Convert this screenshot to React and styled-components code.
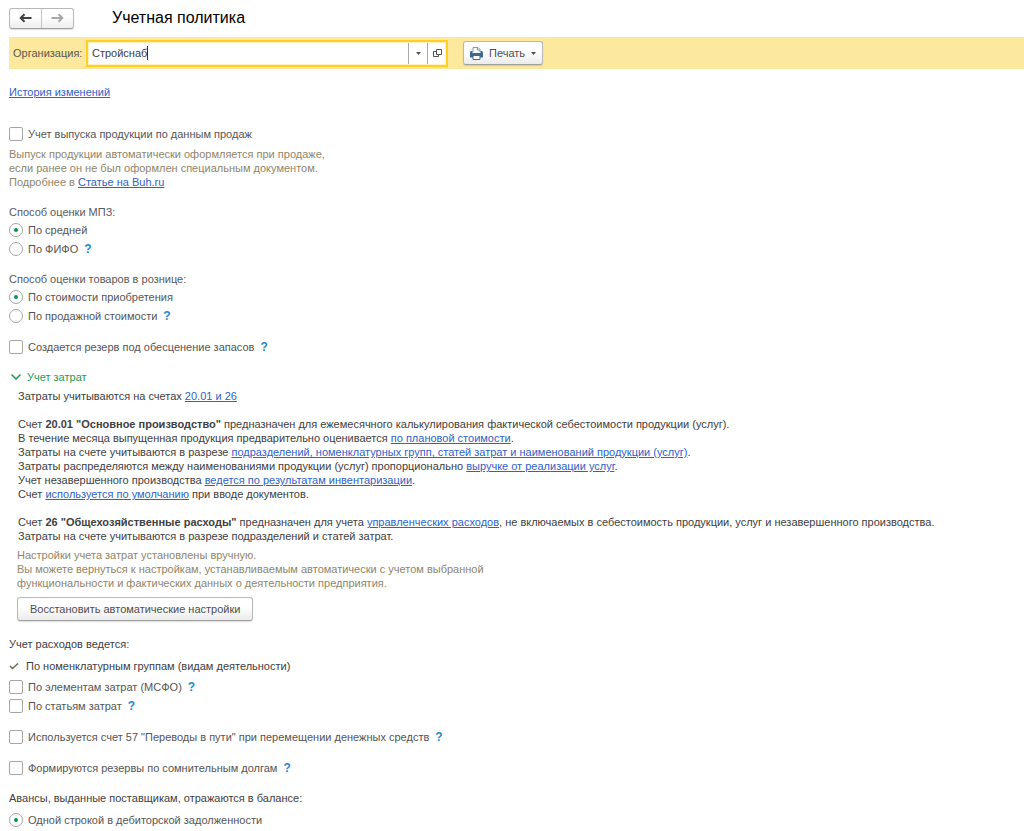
import React, { useId, useState } from 'react';
import styled, { createGlobalStyle } from 'styled-components';

const GlobalStyle = createGlobalStyle`
  *, *::before, *::after { box-sizing: border-box; }
  body {
    margin: 0;
    background: #fff;
    color: #4d4d4d;
    font: 11px/14px "Liberation Sans", Arial, sans-serif;
  }
  button, input { font: inherit; color: inherit; }
`;

const Page = styled.main`
  display: flex;
  flex-direction: column;
  padding: 7px 0 0 9px;
`;

const Header = styled.header`
  display: flex;
  align-items: center;
  gap: 38px;
  height: 22px;
`;

const Title = styled.h1`
  margin: 0;
  color: #000;
  font-size: 16px;
  line-height: 20px;
  font-weight: 400;
`;

const NavButtons = styled.div`
  display: flex;
  width: 65px;
  height: 21px;
  border: 1px solid #b8b8b8;
  border-bottom-color: #a0a0a0;
  border-radius: 3px;
  background: linear-gradient(#fff 40%, #ededed);
  box-shadow: 0 1px 1px #ddd;
`;

const NavButton = styled.button`
  flex: 1;
  display: flex;
  align-items: center;
  justify-content: center;
  padding: 0;
  border: 0;
  background: none;
  color: ${(p) => (p.disabled ? '#a8a8a8' : '#404040')};
  & + & { border-left: 1px solid #c4c4c4; }
`;

const CommandBar = styled.div`
  display: flex;
  align-items: center;
  height: 32px;
  margin-top: 8px;
  padding-left: 4px;
  background: #fce99d;
`;

const FieldLabel = styled.label`
  width: 73px;
  white-space: nowrap;
  color: #5c574a;
`;

const ComboBox = styled.div`
  display: flex;
  align-items: stretch;
  flex: 0 1 362px;
  height: 27px;
  border: 2px solid #ffcf26;
  background: #fff;
  box-shadow: inset 0 0 0 1px #fff3c4;
`;

const ComboValue = styled.div`
  flex: 1;
  display: flex;
  align-items: center;
  padding-left: 4px;
`;

const ComboInput = styled.input`
  field-sizing: content;
  padding: 0;
  border: 0;
  outline: 0;
  background: none;
  color: #404040;
  caret-color: transparent;
`;

const Caret = styled.span`
  width: 1px;
  height: 14px;
  background: #333;
`;

const ComboButton = styled.button`
  display: flex;
  align-items: center;
  justify-content: center;
  width: 19px;
  margin: 1px 0;
  padding: 0;
  border: 0;
  border-left: 1px solid #a9a9a9;
  background: none;
  color: #555;
`;

const Button = styled.button`
  display: flex;
  align-items: center;
  justify-content: center;
  align-self: flex-start;
  height: 24px;
  gap: 6px;
  padding: 0 ${(p) => (p.$compact ? 6 : 12)}px;
  border: 1px solid #b8b8b8;
  border-bottom-color: #a0a0a0;
  border-radius: 3px;
  background: linear-gradient(#fff 40%, #ebebeb);
  box-shadow: 0 1px 1px #0002;
  color: #4d4d4d;
  white-space: nowrap;
`;

const PrintSlot = styled.div`
  margin-left: 15px;
`;

const Link = styled.a`
  color: #2f62c4;
  text-decoration: underline;
`;

const Section = styled.section`
  display: flex;
  flex-direction: column;
  align-items: flex-start;
  margin-top: ${(p) => p.$space}px;
`;

const Group = styled.fieldset`
  display: flex;
  flex-direction: column;
  min-width: 0;
  margin: ${(p) => p.$space}px 0 0;
  padding: 0;
  border: 0;
`;

const Legend = styled.legend`
  padding: 0 0 ${(p) => p.$after ?? 1}px;
  color: ${(p) => (p.$dark ? '#404040' : '#595959')};
`;

const OptionRow = styled.div`
  display: flex;
  align-items: center;
  height: 19px;
`;

const OptionLabel = styled.label`
  display: flex;
  align-items: center;
  gap: 5px;
  color: #555;
`;

const Mark = styled.input`
  appearance: none;
  display: grid;
  place-items: center;
  width: 14px;
  height: 14px;
  margin: 0;
  border: 1px solid #a6a6a6;
  border-radius: ${(p) => (p.type === 'radio' ? '50%' : '2px')};
  background: #fff;
  &:checked::before {
    content: '';
    width: 4px;
    height: 4px;
    border-radius: ${(p) => (p.type === 'radio' ? '50%' : '0')};
    background: #00984a;
  }
`;

const HelpButton = styled.button`
  margin: 0 0 0 6px;
  padding: 0;
  border: 0;
  background: none;
  color: #2189cc;
  font-size: 12px;
  font-weight: 700;
`;

const Hint = styled.p`
  margin: ${(p) => p.$space}px 0 0;
  color: #8f8569;
`;

const Disclosure = styled.button`
  display: flex;
  align-items: center;
  gap: 6px;
  padding: 0 0 0 2px;
  border: 0;
  background: none;
  color: #1a9c55;
`;

const Details = styled.div`
  display: flex;
  flex-direction: column;
  gap: 14px;
  padding: 5px 0 0 9px;
`;

const Rule = styled.p`
  margin: 0;
  color: #404040;
`;

const RestoreBlock = styled.div`
  display: flex;
  flex-direction: column;
  gap: 7px;
  padding: 5px 0 0 8px;
`;

const FixedOption = styled.div`
  display: flex;
  align-items: center;
  gap: 7px;
  height: 14px;
  margin-bottom: 4px;
  color: #404040;
`;

function Arrow({ back }) {
  return (
    <svg width="13" height="10" viewBox="0 0 13 10" fill="none" stroke="currentColor" strokeWidth="2" aria-hidden="true">
      <path d={back ? 'M12.5 5H2M5.5 1.2L1.7 5l3.8 3.8' : 'M.5 5H11M7.5 1.2L11.3 5 7.5 8.8'} />
    </svg>
  );
}

function Triangle() {
  return (
    <svg width="5" height="3" viewBox="0 0 5 3" aria-hidden="true">
      <path d="M0 0h5L2.5 3z" fill="currentColor" />
    </svg>
  );
}

function OpenIcon() {
  return (
    <svg width="9" height="9" viewBox="0 0 9 9" fill="none" stroke="currentColor" aria-hidden="true">
      <path d="M3.5.5h5v5h-5zM3.5 2.5h-3v5h5v-2" />
    </svg>
  );
}

function PrinterIcon() {
  return (
    <svg width="13" height="13" viewBox="0 0 13 13" aria-hidden="true">
      <path d="M3 5V.5h5l2 2V5" fill="#fff" stroke="#7f99b0" />
      <path d="M7.5 .5V3H10" fill="none" stroke="#7f99b0" />
      <path d="M1 4h1.500v2h8V4H12l1 1v5.500H0V5z" fill="#41698f" />
      <path d="M3 8.5h7v4H3z" fill="#fff" stroke="#41698f" />
    </svg>
  );
}

function Option({ type = 'checkbox', name, checked = false, help, children }) {
  const id = useId();
  return (
    <OptionRow>
      <OptionLabel htmlFor={id}>
        <Mark id={id} type={type} name={name} defaultChecked={checked} />
        {children}
      </OptionLabel>
      {help && <HelpButton type="button">?</HelpButton>}
    </OptionRow>
  );
}

export default function App() {
  const [organization, setOrganization] = useState('Стройснаб');
  const [costsOpen, setCostsOpen] = useState(true);

  return (
    <Page>
      <GlobalStyle />
      <Header>
        <NavButtons>
          <NavButton type="button" aria-label="Назад"><Arrow back /></NavButton>
          <NavButton type="button" aria-label="Вперед" disabled><Arrow /></NavButton>
        </NavButtons>
        <Title>Учетная политика</Title>
      </Header>

      <CommandBar>
        <FieldLabel htmlFor="organization">Организация:</FieldLabel>
        <ComboBox>
          <ComboValue>
            <ComboInput id="organization" value={organization} onChange={(e) => setOrganization(e.target.value)} />
            <Caret />
          </ComboValue>
          <ComboButton type="button" aria-label="Выбрать"><Triangle /></ComboButton>
          <ComboButton type="button" aria-label="Открыть"><OpenIcon /></ComboButton>
        </ComboBox>
        <PrintSlot>
          <Button type="button" $compact><PrinterIcon />Печать<Triangle /></Button>
        </PrintSlot>
      </CommandBar>

      <Section $space={16}>
        <Link href="#history">История изменений</Link>
      </Section>

      <Section $space={25}>
        <Option>Учет выпуска продукции по данным продаж</Option>
        <Hint $space={4}>
          Выпуск продукции автоматически оформляется при продаже,<br />
          если ранее он не был оформлен специальным документом.<br />
          Подробнее в <Link href="#article">Статье на Buh.ru</Link>
        </Hint>
      </Section>

      <Group $space={16}>
        <Legend>Способ оценки МПЗ:</Legend>
        <Option type="radio" name="stock" checked>По средней</Option>
        <Option type="radio" name="stock" help>По ФИФО</Option>
      </Group>

      <Group $space={14}>
        <Legend>Способ оценки товаров в рознице:</Legend>
        <Option type="radio" name="retail" checked>По стоимости приобретения</Option>
        <Option type="radio" name="retail" help>По продажной стоимости</Option>
      </Group>

      <Section $space={12}>
        <Option help>Создается резерв под обесценение запасов</Option>
      </Section>

      <Section $space={14}>
        <Disclosure type="button" aria-expanded={costsOpen} onClick={() => setCostsOpen(!costsOpen)}>
          <svg width="10" height="6" viewBox="0 0 10 6" fill="none" stroke="currentColor" strokeWidth="1.5" aria-hidden="true">
            <path d="M.5.5L5 5 9.5.5" />
          </svg>
          Учет затрат
        </Disclosure>
        {costsOpen && (
          <>
            <Details>
              <Rule>Затраты учитываются на счетах <Link href="#accounts">20.01 и 26</Link></Rule>
              <Rule>
                Счет <b>20.01 "Основное производство"</b> предназначен для ежемесячного калькулирования фактической себестоимости продукции (услуг).<br />
                В течение месяца выпущенная продукция предварительно оценивается <Link href="#planned">по плановой стоимости</Link>.<br />
                Затраты на счете учитываются в разрезе <Link href="#breakdown">подразделений, номенклатурных групп, статей затрат и наименований продукции (услуг)</Link>.<br />
                Затраты распределяются между наименованиями продукции (услуг) пропорционально <Link href="#revenue">выручке от реализации услуг</Link>.<br />
                Учет незавершенного производства <Link href="#inventory">ведется по результатам инвентаризации</Link>.<br />
                Счет <Link href="#default">используется по умолчанию</Link> при вводе документов.
              </Rule>
              <Rule>
                Счет <b>26 "Общехозяйственные расходы"</b> предназначен для учета <Link href="#management">управленческих расходов</Link>, не включаемых в себестоимость продукции, услуг и незавершенного производства.<br />
                Затраты на счете учитываются в разрезе подразделений и статей затрат.
              </Rule>
            </Details>
            <RestoreBlock>
              <Hint $space={0}>
                Настройки учета затрат установлены вручную.<br />
                Вы можете вернуться к настройкам, устанавливаемым автоматически с учетом выбранной<br />
                функциональности и фактических данных о деятельности предприятия.
              </Hint>
              <Button type="button">Восстановить автоматические настройки</Button>
            </RestoreBlock>
          </>
        )}
      </Section>

      <Group $space={16}>
        <Legend $dark $after={8}>Учет расходов ведется:</Legend>
        <FixedOption>
          <svg width="10" height="8" viewBox="0 0 10 8" fill="none" stroke="#6b6b4f" strokeWidth="1.5" aria-hidden="true">
            <path d="M1 4l2.500 2.500L9 1.500" />
          </svg>
          По номенклатурным группам (видам деятельности)
        </FixedOption>
        <Option help>По элементам затрат (МСФО)</Option>
        <Option help>По статьям затрат</Option>
      </Group>

      <Section $space={12}>
        <Option help>Используется счет 57 "Переводы в пути" при перемещении денежных средств</Option>
      </Section>

      <Section $space={12}>
        <Option help>Формируются резервы по сомнительным долгам</Option>
      </Section>

      <Group $space={14}>
        <Legend $dark $after={5}>Авансы, выданные поставщикам, отражаются в балансе:</Legend>
        <Option type="radio" name="advances" checked>Одной строкой в дебиторской задолженности</Option>
      </Group>
    </Page>
  );
}
